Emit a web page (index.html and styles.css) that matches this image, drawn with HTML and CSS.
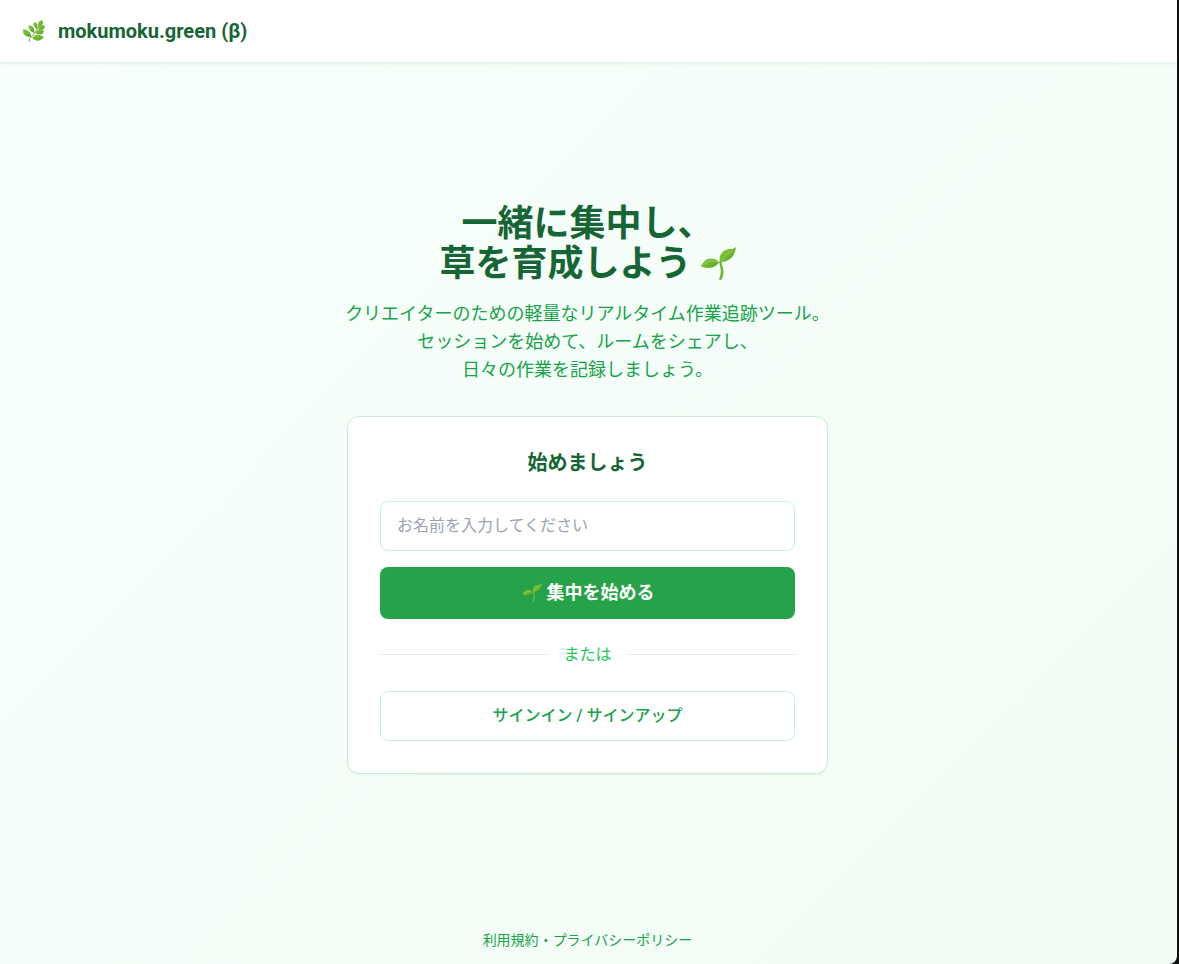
FILE: index.html
```html
<!DOCTYPE html>
<html lang="ja">
<head>
    <meta charset="UTF-8">
    <meta name="viewport" content="width=device-width, initial-scale=1.0">
    <title>mokumoku.green (β)</title>
    <link rel="stylesheet" href="styles.css">
</head>
<body>
    <svg class="defs" aria-hidden="true">
        <defs>
            <linearGradient id="leaf" x1="0" y1="0" x2="1" y2="1">
                <stop offset="0" stop-color="#8ccb3c"></stop>
                <stop offset="0.6" stop-color="#69b52d"></stop>
                <stop offset="1" stop-color="#4c9a24"></stop>
            </linearGradient>
            <symbol id="seedling" viewBox="0 0 36 36">
                <path d="M1 21C3 13 12 9 19 16C16 22 8 23 3 21Q2 21 1 21Z" fill="url(#leaf)"></path>
                <path d="M20 16C18 8 24 3 31 3Q34 3 36 1C35 10 30 16 20 16Z" fill="url(#leaf)"></path>
                <path d="M17 14Q20 17 20 20Q22 26 19 33Q20 35 22 33Q25 25 22 19Q21 16 23 13Q20 15 19 16Z" fill="#73b637"></path>
                <path d="M3 19Q10 13 18 16M21 15Q25 8 33 4" fill="none" stroke="#a3d65a" stroke-width="0.7"></path>
            </symbol>
        </defs>
    </svg>

    <div class="page">
        <header class="header">
            <svg class="logo" viewBox="0 0 24 24" aria-hidden="true">
                <path d="M7 23Q7 19 10 17Q15 12 18 5" fill="none" stroke="#87996b" stroke-width="1"></path>
                <g fill="url(#leaf)">
                    <path d="M17 8Q14 3 20 1Q23 5 17 8Z"></path>
                    <path d="M15 10Q10 7 12 3Q17 4 15 10Z"></path>
                    <path d="M12 14Q5 11 7 6Q14 8 12 14Z"></path>
                    <path d="M9 18Q0 18 1 10Q9 11 9 18Z"></path>
                    <path d="M16 10Q18 4 23 7Q22 13 16 10Z"></path>
                    <path d="M13 14Q16 8 22 12Q20 18 13 14Z"></path>
                    <path d="M10 19Q14 13 22 18Q16 25 10 19Z"></path>
                </g>
            </svg>
            <span class="brand">mokumoku.green (β)</span>
        </header>

        <main class="main">
            <h1 class="title">
                一緒に集中し、<br>
                草を育成しよう<svg class="title-icon" aria-hidden="true"><use href="#seedling"></use></svg>
            </h1>
            <p class="lead">
                クリエイターのための軽量なリアルタイム作業追跡ツール。<br>
                セッションを始めて、ルームをシェアし、<br>
                日々の作業を記録しましょう。
            </p>

            <section class="card">
                <h2 class="card-title">始めましょう</h2>
                <form class="form">
                    <input class="input" type="text" name="name" placeholder="お名前を入力してください" aria-label="お名前">
                    <button class="btn btn-primary" type="button"><svg class="btn-icon" aria-hidden="true"><use href="#seedling"></use></svg>集中を始める</button>
                </form>
                <div class="divider">または</div>
                <button class="btn btn-outline" type="button">サインイン / サインアップ</button>
            </section>
        </main>

        <footer class="footer">
            <a href="#">利用規約</a>・<a href="#">プライバシーポリシー</a>
        </footer>
    </div>
</body>
</html>
```

FILE: styles.css
```css
* {
    box-sizing: border-box;
}

html {
    background-color: #111;
}

body {
    margin: 0;
    font-family: Roboto, "Noto Sans CJK JP", sans-serif;
    font-size: 16px;
    line-height: 24px;
    color: #166534;
}

.defs {
    position: absolute;
    width: 0;
    height: 0;
}

.page {
    display: flex;
    flex-direction: column;
    min-height: 100vh;
    margin-right: 2px;
    border-bottom-right-radius: 8px;
    background: linear-gradient(135deg, #f7fffa, #f2fcf5);
    overflow: hidden;
}

.header {
    display: flex;
    align-items: center;
    gap: 12px;
    padding: 16px 22px;
    background-color: #fff;
    border-bottom: 1px solid #e3f5e9;
    box-shadow: 0 1px 2px rgba(22, 101, 52, 0.08);
}

.logo {
    width: 24px;
    height: 24px;
}

.brand {
    font-size: 20px;
    line-height: 30px;
    font-weight: 700;
}

.main {
    flex: 1;
    display: flex;
    flex-direction: column;
    align-items: center;
    justify-content: center;
    padding: 32px 18px 32px 16px;
    text-align: center;
}

.title {
    margin: 0 0 16px;
    font-size: 36px;
    line-height: 40px;
    font-weight: 700;
}

.title-icon {
    width: 36px;
    height: 36px;
    margin-left: 8px;
    vertical-align: -6px;
}

.lead {
    margin: 0 0 32px;
    font-size: 18px;
    line-height: 28px;
    color: #16a34a;
}

.card {
    width: 100%;
    max-width: 481px;
    padding: 32px;
    background-color: #fff;
    border: 1px solid #c6f0d6;
    border-radius: 12px;
    box-shadow: 0 1px 2px rgba(0, 0, 0, 0.06);
}

.card-title {
    margin: 0 0 24px;
    font-size: 20px;
    line-height: 28px;
    font-weight: 700;
}

.form {
    display: flex;
    flex-direction: column;
    gap: 16px;
}

.input,
.btn {
    width: 100%;
    padding: 12px 16px;
    border: 1px solid #c6f0e0;
    border-radius: 8px;
    background-color: #fff;
    font-family: inherit;
    font-size: 16px;
    line-height: 24px;
}

.input {
    height: 50px;
}

.input::placeholder {
    color: #9ca3af;
}

.btn {
    display: flex;
    align-items: center;
    justify-content: center;
    cursor: pointer;
}

.btn-primary {
    gap: 4px;
    border: none;
    background-color: #26a34a;
    color: #fff;
    font-size: 18px;
    line-height: 28px;
    font-weight: 700;
}

.btn-icon {
    width: 22px;
    height: 20px;
}

.btn-outline {
    color: #16a34a;
    font-weight: 500;
}

.divider {
    display: flex;
    align-items: center;
    gap: 16px;
    margin: 24px 0;
    color: #22c55e;
}

.divider::before,
.divider::after {
    content: "";
    flex: 1;
    height: 1px;
    background-color: #e0ebe5;
}

.footer {
    padding: 16px 18px 14px 16px;
    text-align: center;
    font-size: 14px;
    line-height: 20px;
    color: #16a34a;
}

.footer a {
    color: inherit;
    text-decoration: none;
}
```
